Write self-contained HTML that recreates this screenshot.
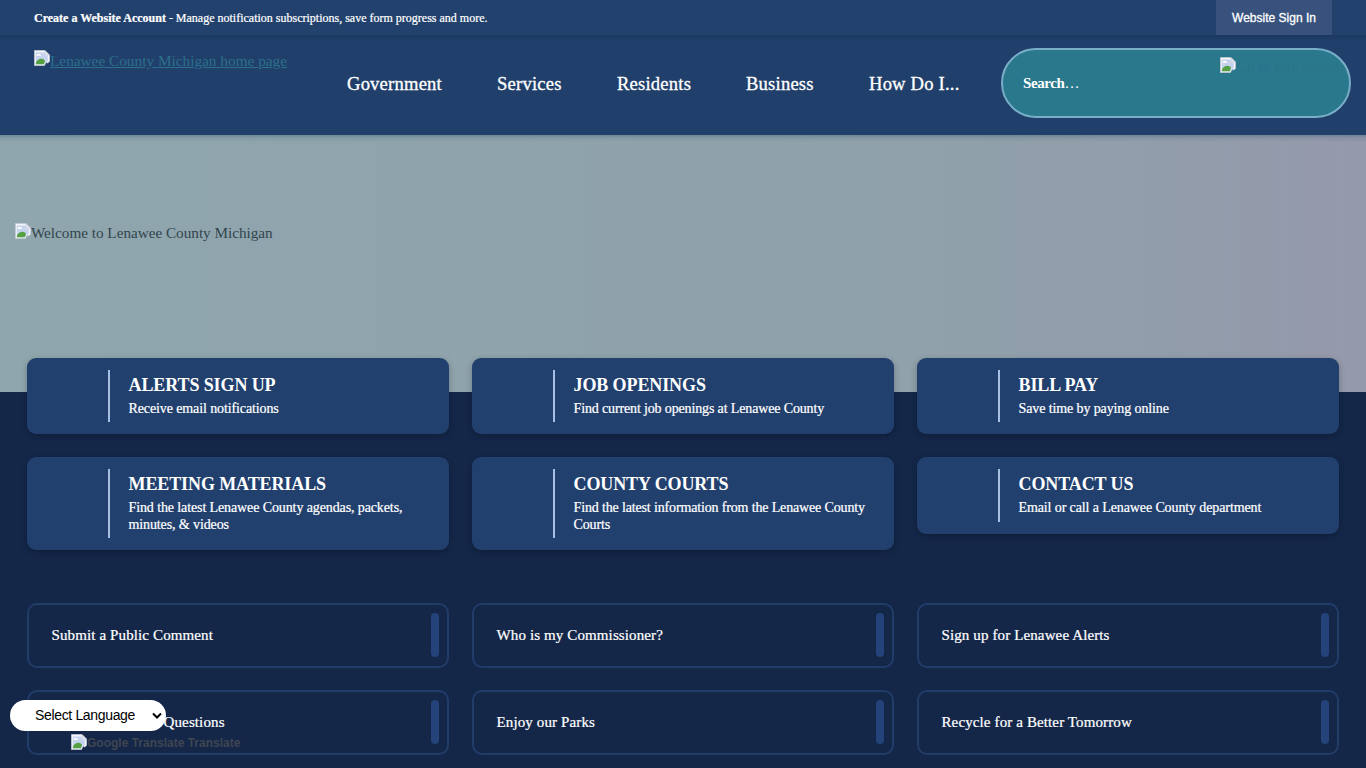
<!DOCTYPE html>
<html lang="en">
<head>
<meta charset="utf-8">
<title>Lenawee County Michigan</title>
<style>
*{box-sizing:border-box;margin:0;padding:0}
html,body{width:1366px;height:768px;overflow:hidden;background:#142749;font-family:"Liberation Serif",serif;color:#fff}
.abs{position:absolute}
#topbar{left:0;top:0;width:1366px;height:35px;background:#22416d}
#topbar .msg{left:34px;top:11px;font-size:12px;line-height:14px;white-space:nowrap;-webkit-text-stroke:.22px #fff}
#signin{left:1216px;top:0;width:116px;height:35px;background:#38527d;font-family:"Liberation Sans",sans-serif;font-size:12px;line-height:37px;text-align:center;color:#fff;-webkit-text-stroke:.3px #fff}
#header{left:0;top:35px;width:1366px;height:100px;background:linear-gradient(180deg,#1c3762 0,#1f3c68 3px,#213f6b 5px,#213f6b 100%)}
.nav{top:73px;font-size:18.6px;line-height:22px;white-space:nowrap;color:#fff;-webkit-text-stroke:.3px #fff;letter-spacing:.2px}
#logo{left:34px;top:52px;font-size:15.3px;line-height:18px;color:#2b708c;text-decoration:underline;white-space:nowrap}
#search{left:1001px;top:48px;width:350px;height:70px;border-radius:35px;background:#29788c;border:2px solid #78aec6}
#search .ph{left:20px;top:24px;font-size:15px;line-height:18px;font-weight:bold;color:#fff;letter-spacing:-0.4px;white-space:nowrap}
#search .ph span{font-weight:normal;letter-spacing:-0.2px}
#search .alt{left:217px;top:8px;font-size:15.3px;line-height:18px;color:#2c7389;white-space:nowrap}
#hero{left:0;top:135px;width:1366px;height:257px;background:linear-gradient(180deg,rgba(40,80,105,.32) 0,rgba(40,80,105,.12) 3px,rgba(40,80,105,0) 7px),linear-gradient(90deg,#8fa6ad 0%,#8fa3ac 40%,#90a1ab 68%,#919eab 82%,#939bab 92%,#9599ac 100%)}
#hero .alt{left:15px;top:89px;font-size:15.2px;line-height:18px;color:#32444e;white-space:nowrap}
.card{width:422px;background:#22406e;border-radius:9px;box-shadow:0 2px 6px rgba(0,0,0,.25)}
.card .bar{left:81px;top:12px;width:2px;bottom:12px;background:#a6bfe2}
.card h3{position:absolute;left:101.5px;top:17px;font-size:18px;line-height:20px;font-weight:bold;white-space:nowrap;letter-spacing:-0.1px}
.card p{position:absolute;left:101.5px;top:42px;font-size:14px;line-height:17px;width:300px;letter-spacing:-0.11px;-webkit-text-stroke:.22px #fff}
.link{width:422px;height:65px;border:2px solid #223c69;border-radius:10px}
.link span{position:absolute;left:22.5px;top:21px;font-size:15px;line-height:18px;white-space:nowrap;letter-spacing:.12px;-webkit-text-stroke:.22px #fff}
.link i{position:absolute;right:8px;top:8px;width:8px;height:44px;border-radius:4px;background:#24437a}
#lang{left:10px;top:700px;width:156px;height:31px;border-radius:16px;background:#fff;color:#000;font-family:"Liberation Sans",sans-serif;font-size:14px;line-height:31px;letter-spacing:-.34px}
#gt{left:71px;top:733px;font-family:"Liberation Sans",sans-serif;font-size:12px;font-weight:bold;line-height:14px;color:#3f4551;white-space:nowrap}
.bi{display:inline-block;width:16px;height:16px;vertical-align:-2px;position:relative;top:-1px}
#logo .bi{top:-2px}
#gt .bi{top:1px}
</style>
</head>
<body>
<div id="topbar" class="abs">
  <div class="msg abs"><b>Create a Website Account</b> - Manage notification subscriptions, save form progress and more.</div>
  <div id="signin" class="abs">Website Sign In</div>
</div>
<div id="header" class="abs"></div>
<div id="logo" class="abs"><svg class="bi" viewBox="0 0 16 16"><path d="M.5 .5h10.500l4.500 4.500v6.500l-2 1.500-1.500-1-1.500 3.500H.5z" fill="#f3f5fa" stroke="#c3c9d4" stroke-width=".8"/><path d="M1.800 2.500h9v3h3v5.600l-1.100.9-1.600-1.100-1.300 3.300H1.800z" fill="#c6d3ef"/><path d="M3 4.400c.8-1 2.400-1 3.100 0 .9 0 1.200.6 1 1.300H2.800c-.6-.3-.5-1.100.2-1.300z" fill="#fff"/><path d="M1.800 14.200c.3-4.200 4.600-7 8.600-4.400l.6 1.400-1.200 3z" fill="#55a043"/><path d="M11 .8v4.200h4.200z" fill="#e8ecf4" stroke="#c3c9d4" stroke-width=".7"/></svg>Lenawee County Michigan home page</div>
<div class="nav abs" style="left:347px">Government</div>
<div class="nav abs" style="left:497px">Services</div>
<div class="nav abs" style="left:617px">Residents</div>
<div class="nav abs" style="left:746px">Business</div>
<div class="nav abs" style="left:869px">How Do I...</div>
<div id="search" class="abs">
  <div class="ph abs">Search<span>…</span></div>
  <div class="alt abs"><svg class="bi" viewBox="0 0 16 16"><path d="M.5 .5h10.500l4.500 4.500v6.500l-2 1.500-1.500-1-1.500 3.500H.5z" fill="#f3f5fa" stroke="#c3c9d4" stroke-width=".8"/><path d="M1.800 2.500h9v3h3v5.600l-1.100.9-1.600-1.100-1.300 3.300H1.800z" fill="#c6d3ef"/><path d="M3 4.400c.8-1 2.400-1 3.100 0 .9 0 1.200.6 1 1.300H2.800c-.6-.3-.5-1.100.2-1.300z" fill="#fff"/><path d="M1.800 14.200c.3-4.200 4.600-7 8.600-4.400l.6 1.400-1.200 3z" fill="#55a043"/><path d="M11 .8v4.200h4.200z" fill="#e8ecf4" stroke="#c3c9d4" stroke-width=".7"/></svg>Go to Site Search</div>
</div>
<div id="hero" class="abs">
  <div class="alt abs"><svg class="bi" viewBox="0 0 16 16"><path d="M.5 .5h10.500l4.500 4.500v6.500l-2 1.500-1.500-1-1.500 3.500H.5z" fill="#f3f5fa" stroke="#c3c9d4" stroke-width=".8"/><path d="M1.800 2.500h9v3h3v5.600l-1.100.9-1.600-1.100-1.300 3.300H1.800z" fill="#c6d3ef"/><path d="M3 4.400c.8-1 2.400-1 3.100 0 .9 0 1.200.6 1 1.300H2.800c-.6-.3-.5-1.100.2-1.300z" fill="#fff"/><path d="M1.800 14.200c.3-4.200 4.600-7 8.600-4.400l.6 1.400-1.200 3z" fill="#55a043"/><path d="M11 .8v4.200h4.200z" fill="#e8ecf4" stroke="#c3c9d4" stroke-width=".7"/></svg>Welcome to Lenawee County Michigan</div>
</div>

<div class="card abs" style="left:27px;top:358px;height:76px"><div class="bar abs"></div><h3>ALERTS SIGN UP</h3><p>Receive email notifications</p></div>
<div class="card abs" style="left:472px;top:358px;height:76px"><div class="bar abs"></div><h3>JOB OPENINGS</h3><p style="letter-spacing:-.14px">Find current job openings at Lenawee County</p></div>
<div class="card abs" style="left:917px;top:358px;height:76px"><div class="bar abs"></div><h3>BILL PAY</h3><p>Save time by paying online</p></div>
<div class="card abs" style="left:27px;top:457px;height:93px"><div class="bar abs"></div><h3>MEETING MATERIALS</h3><p>Find the latest Lenawee County agendas, packets, minutes, &amp; videos</p></div>
<div class="card abs" style="left:472px;top:457px;height:93px"><div class="bar abs"></div><h3>COUNTY COURTS</h3><p style="letter-spacing:-.15px">Find the latest information from the Lenawee County Courts</p></div>
<div class="card abs" style="left:917px;top:457px;height:77px"><div class="bar abs"></div><h3>CONTACT US</h3><p>Email or call a Lenawee County department</p></div>

<div class="link abs" style="left:27px;top:603px"><span>Submit a Public Comment</span><i></i></div>
<div class="link abs" style="left:472px;top:603px"><span>Who is my Commissioner?</span><i></i></div>
<div class="link abs" style="left:917px;top:603px"><span>Sign up for Lenawee Alerts</span><i></i></div>
<div class="link abs" style="left:27px;top:690px"><span>Frequently Asked Questions</span><i></i></div>
<div class="link abs" style="left:472px;top:690px"><span>Enjoy our Parks</span><i></i></div>
<div class="link abs" style="left:917px;top:690px"><span>Recycle for a Better Tomorrow</span><i></i></div>

<div id="lang" class="abs"><span style="position:absolute;left:25px;top:0">Select Language</span><svg class="abs" style="left:141px;top:10px" width="12" height="12" viewBox="0 0 12 12"><path d="M2 3.5l4 4 4-4" fill="none" stroke="#000" stroke-width="2"/></svg></div>
<div id="gt" class="abs"><svg class="bi" viewBox="0 0 16 16"><path d="M.5 .5h10.500l4.500 4.500v6.500l-2 1.500-1.500-1-1.500 3.500H.5z" fill="#f3f5fa" stroke="#c3c9d4" stroke-width=".8"/><path d="M1.800 2.500h9v3h3v5.600l-1.100.9-1.600-1.100-1.300 3.300H1.800z" fill="#c6d3ef"/><path d="M3 4.400c.8-1 2.400-1 3.100 0 .9 0 1.200.6 1 1.300H2.800c-.6-.3-.5-1.100.2-1.300z" fill="#fff"/><path d="M1.800 14.200c.3-4.200 4.600-7 8.600-4.400l.6 1.400-1.200 3z" fill="#55a043"/><path d="M11 .8v4.200h4.200z" fill="#e8ecf4" stroke="#c3c9d4" stroke-width=".7"/></svg>Google Translate Translate</div>
</body>
</html>
